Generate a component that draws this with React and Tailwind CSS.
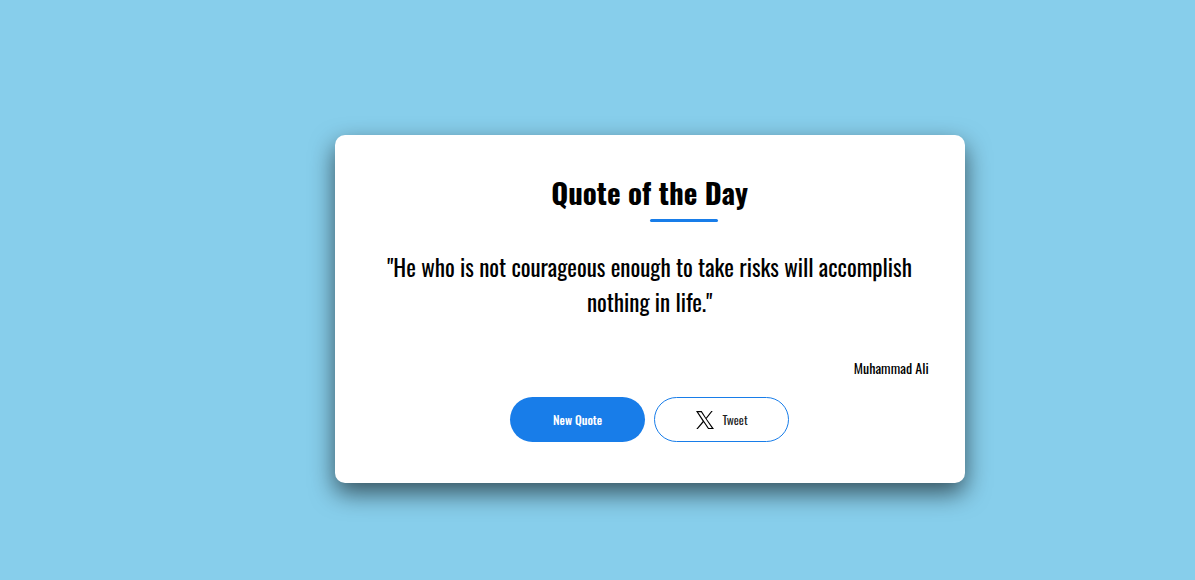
const XLogo = () => (
  <svg className="h-[18px] w-[18px]" viewBox="0 0 24 24" fill="#000" aria-hidden="true">
    <path d="M14.1 10.3 22.3 0h-1.9l-7.1 8.9L7.6 0H0l8.9 13.8L.4 24h2l7.7-9.1 6 9.1H24L14.1 10.3zM2.9 1.5h3.9l14.2 21h-4L2.9 1.5z" />
  </svg>
);

export default function App() {
  return (
    <main className="min-h-screen bg-[#87ceeb] pt-[135px] pb-12 text-black font-['Oswald',sans-serif]">
      <section className="ml-[28%] w-full max-w-[630px] rounded-[10px] bg-white px-9 pt-8 pb-[41px] text-center shadow-[0_10px_25px_rgba(0,0,0,0.6)]">
        <h1 className="flex flex-col items-center text-[29px] leading-[50px] font-bold">
          Quote of the Day
          <span className="mt-0.5 ml-[68px] h-[3px] w-[68px] rounded-full bg-[#187de9]" />
        </h1>
        <blockquote className="mt-7 text-[23px] leading-[35px]">
          "He who is not courageous enough to take risks will accomplish nothing in life."
        </blockquote>
        <p className="mt-9 text-right text-sm leading-6">Muhammad Ali</p>
        <div className="mt-[17px] flex justify-center gap-[9px]">
          <button className="h-[45px] w-[135px] rounded-full bg-[#187de9] text-xs font-medium text-white">
            New Quote
          </button>
          <button className="flex h-[45px] w-[135px] items-center justify-center gap-[9px] rounded-full border border-[#187de9] bg-white text-xs text-[#222]">
            <XLogo />
            Tweet
          </button>
        </div>
      </section>
    </main>
  );
}
